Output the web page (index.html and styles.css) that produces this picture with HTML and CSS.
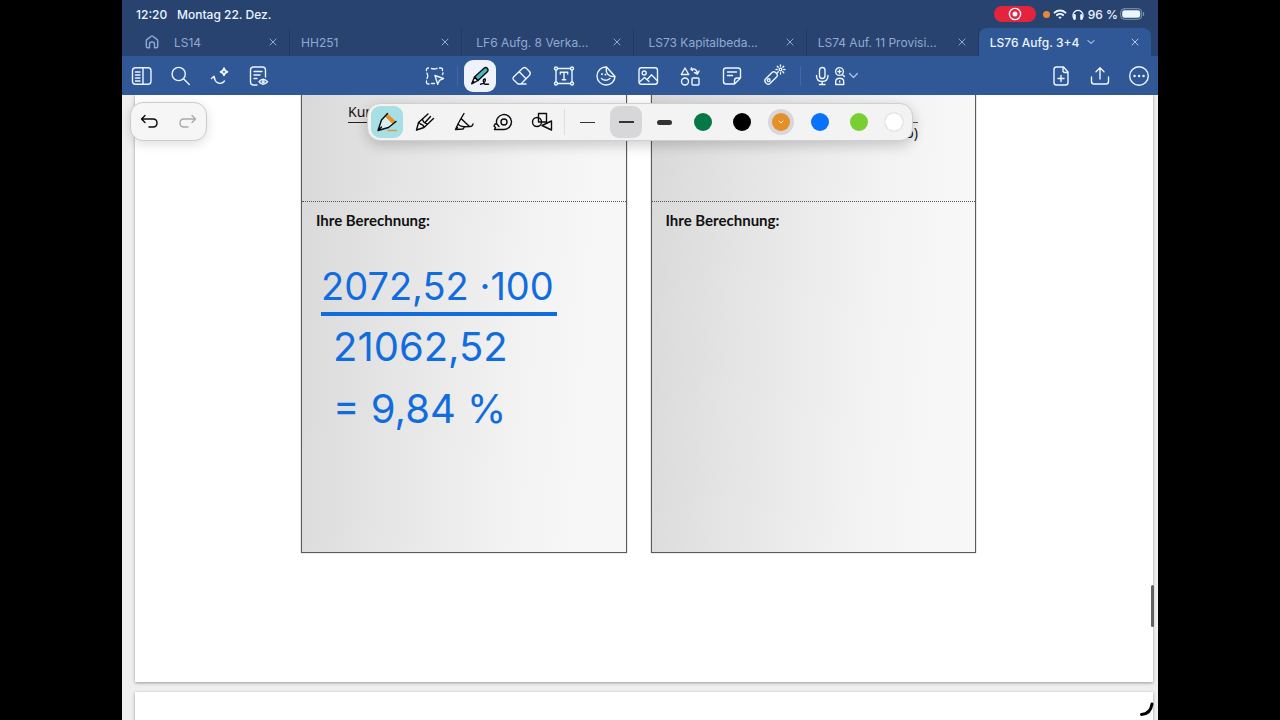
FILE: index.html
```html
<!DOCTYPE html>
<html lang="de">
<head>
<meta charset="utf-8">
<meta name="viewport" content="width=device-width, initial-scale=1">
<title>LS76 Aufg. 3+4</title>
<link rel="stylesheet" href="styles.css">
</head>
<body>
<div class="device">
  <header class="status">
    <span class="status-time">12:20</span>
    <span>Montag 22. Dez.</span>
    <div class="status-right">
      <span class="record"><svg class="icon-s" viewBox="0 0 16 16"><circle cx="8" cy="8" r="5.6"/><circle class="fill" cx="8" cy="8" r="2.5"/></svg></span>
      <span class="mic-dot"></span>
      <svg class="icon-s wifi" viewBox="0 0 16 16"><path d="M2.6 6.6a7.8 7.8 0 0 1 10.800 0M5 9.100a4.400 4.400 0 0 1 6 0"/><path class="fill" d="M6.300 11.200a2.500 2.500 0 0 1 3.400 0L8 13z"/></svg>
      <svg class="icon-s" viewBox="0 0 16 16"><path d="M4 12.500A5 5 0 1 1 12 12.500"/><path class="thick" d="M4.600 9.300v3.400M11.400 9.300v3.400"/></svg>
      <span>96 %</span>
      <svg class="battery" viewBox="0 0 25 12"><rect class="shell" x=".7" y=".7" width="21" height="10.6" rx="3.6"/><rect class="fill" x="2.2" y="2.2" width="18" height="7.6" rx="2.4"/><path class="shell" d="M23.600 4.500v3"/></svg>
    </div>
  </header>

  <nav class="tabs">
    <button class="home" aria-label="Startseite"><svg class="icon-s" viewBox="0 0 16 16"><path d="M2.300 6.600Q2.300 6 2.800 5.600L7.200 2.200Q8 1.600 8.800 2.200L13.200 5.600Q13.700 6 13.700 6.600V12.500Q13.700 13.800 12.400 13.800H10.500V10Q10.500 8 8 8T5.500 10V13.800H3.600Q2.300 13.800 2.300 12.500z"/></svg></button>
    <div class="tab tab-cut"><span>LS14</span><button class="close" aria-label="Schließen"><svg viewBox="0 0 8 8"><path d="M1 1l6 6M7 1L1 7"/></svg></button></div>
    <div class="tab"><span>HH251</span><button class="close" aria-label="Schließen"><svg viewBox="0 0 8 8"><path d="M1 1l6 6M7 1L1 7"/></svg></button></div>
    <div class="tab tab-long"><span>LF6 Aufg. 8 Verka...</span><button class="close" aria-label="Schließen"><svg viewBox="0 0 8 8"><path d="M1 1l6 6M7 1L1 7"/></svg></button></div>
    <div class="tab tab-long"><span>LS73 Kapitalbeda...</span><button class="close" aria-label="Schließen"><svg viewBox="0 0 8 8"><path d="M1 1l6 6M7 1L1 7"/></svg></button></div>
    <div class="tab"><span>LS74 Auf. 11 Provisi...</span><button class="close" aria-label="Schließen"><svg viewBox="0 0 8 8"><path d="M1 1l6 6M7 1L1 7"/></svg></button></div>
    <div class="tab tab-active"><span>LS76 Aufg. 3+4</span><svg class="chev" viewBox="0 0 8 8"><path d="M1 2.500l3 3 3-3"/></svg><button class="close" aria-label="Schließen"><svg viewBox="0 0 8 8"><path d="M1 1l6 6M7 1L1 7"/></svg></button></div>
  </nav>

  <div class="toolbar">
    <div class="tools">
      <button class="tool" aria-label="Seitenleiste"><svg class="icon" viewBox="0 0 24 24"><rect x="2.500" y="3.800" width="18.500" height="16.500" rx="3"/><path d="M13 4v16M5.500 8H10M5.500 11H10M5.500 14H10M5.500 17H10"/></svg></button>
      <button class="tool" aria-label="Suchen"><svg class="icon" viewBox="0 0 24 24"><circle cx="9.700" cy="10" r="6.600"/><path d="M14.500 14.800l5.800 5.700"/></svg></button>
      <button class="tool" aria-label="Assistent"><svg class="icon" viewBox="0 0 24 24"><path d="M3.500 14.500l2.500-2.200 1 3M6 12.500c.5 6.500 7 9 10.500 4.500"/><path class="mid" d="M16 4.200q.7 3 3.500 3.600-2.800.7-3.500 3.600-.7-2.900-3.500-3.600 2.800-.6 3.500-3.600z"/></svg></button>
      <button class="tool" aria-label="Leseansicht"><svg class="icon" viewBox="0 0 24 24"><path d="M18.500 13V6q0-3-3-3H6.500q-3 0-3 3v12q0 3 3 3H10M7 7.500h8M7 11h6M7 14.500h3"/><path d="M12 17.800q4-5 8.500 0-4.500 5-8.500 0z"/><circle cx="16.200" cy="17.800" r="1"/></svg></button>
    </div>
    <div class="tools tools-mid">
      <button class="tool" aria-label="Lasso"><svg class="icon" viewBox="0 0 24 24"><path d="M5.500 4Q3 4 3.500 6.500M8.500 4.500q3 1 5.500-.2M16.500 4q3.500-.5 3 2.500M20 9l-.5 1.500M4 9q1.500 2.500 0 5.500M3.500 17Q3 20.500 6 20M8.500 19.500h3M12 11.500l8.500 3-4 1.800-1.800 4z"/></svg></button>
      <i class="rule"></i>
      <button class="tool tool-on" aria-label="Stift"><svg class="icon ink" viewBox="0 0 24 24"><path class="teal" d="M6.500 13L16 4.200Q17.800 2.700 19.300 4.200T19.600 7.500L10 16.500z"/><path d="M6.500 13l3.500 3.500-6.300 3.300zM4 19.500l1.800-1.800"/><path d="M12.500 20.300c4.500-.3 6-5.500 4-5.300s-1.200 4.800.5 5.200h3.500"/></svg></button>
      <button class="tool" aria-label="Radierer"><svg class="icon" viewBox="0 0 24 24"><path d="M3.800 12.800L12.700 4.300Q14.500 2.800 16.300 4.300L19.500 7.500Q21 9.300 19.500 11.200L11 20H8L3.800 16Q2.200 14.400 3.800 12.800zM9.300 7.800l6.700 7M11 20h5"/></svg></button>
      <button class="tool" aria-label="Text"><svg class="icon" viewBox="0 0 24 24"><path d="M5 4.500h14M5 19.500h14M4 6v12M20 6v12M8.300 10V8.300h7.400V10M12 8.300v7.400M10.300 15.700h3.400"/><g class="nodes"><circle cx="4" cy="4.500" r="1.500"/><circle cx="20" cy="4.500" r="1.500"/><circle cx="4" cy="19.500" r="1.500"/><circle cx="20" cy="19.500" r="1.500"/></g></svg></button>
      <button class="tool" aria-label="Sticker"><svg class="icon" viewBox="0 0 24 24"><path d="M12.500 3C7 2.500 3 7 3 12s4 9 9 9 9-4 9-8.500zM12.500 3q-1 5 1.500 7.500t7 2M7.500 14.500q4 3.500 8.500 0"/><path class="mid" d="M8 10v.3M11.500 10.500v.2"/></svg></button>
      <button class="tool" aria-label="Bild"><svg class="icon" viewBox="0 0 24 24"><rect x="3" y="3.800" width="18.500" height="16.500" rx="2.500"/><circle cx="8.200" cy="9" r="2"/><path d="M3.500 18l5-4.500 4.500 4M11 15.800l4.500-5 6 6.200"/></svg></button>
      <button class="tool" aria-label="Elemente"><svg class="icon" viewBox="0 0 24 24"><path d="M7 4l3.700 6.500H3.300zM13 5.500q5-2 6.500 3.800M21 7l-1.500 3-3-1.500M13.500 4l-.5 1.500 1.500 1"/><circle cx="7" cy="17.500" r="3.500"/><rect x="14" y="14" width="7" height="7" rx="1"/></svg></button>
      <button class="tool" aria-label="Notiz"><svg class="icon" viewBox="0 0 24 24"><path d="M14.500 20H6q-2.500 0-2.500-2.500v-11Q3.500 4 6 4h12q2.500 0 2.500 2.500V14l-6 6v-3.500q0-2.500 2.500-2.500h3.500M7.500 8h9M7.500 11.500h5"/></svg></button>
      <button class="tool" aria-label="Laserpointer"><svg class="icon" viewBox="0 0 24 24"><path d="M3.500 15l6.800-6.700q1.500-1.200 3 0l1.500 1.500q1.300 1.500 0 3L8 19.500q-1.700 1.500-3.500 0l-1-1q-1.500-1.800 0-3.500z"/><circle cx="6.700" cy="16.200" r="1.400"/><circle cx="18.500" cy="5.500" r="1.400"/><path d="M18.500 1v1.200M18.500 8.800V10M14 5.500h1.200M21.800 5.500H23M15.300 2.300l.9.900M20.800 7.800l.9.900M15.300 8.700l.9-.9M20.800 3.200l.9-.9"/></svg></button>
      <i class="rule rule-audio"></i>
      <button class="tool tool-audio" aria-label="Audio"><svg class="icon" viewBox="0 0 24 24"><rect x="9.500" y="3.500" width="5.500" height="11" rx="2.700"/><path d="M6.500 11.500q0 6 5.700 6t5.800-6M12.200 17.500v3M9.500 20.500h5.500"/></svg><svg class="icon-n" viewBox="0 0 12 24"><circle cx="5.500" cy="7.500" r="3.900"/><path d="M4 7.500h3M5.500 6v3M8.300 10.500l2 2M1.700 20.500h8v-3q0-3.300-4-3.300t-4 3.300zM5.700 17v1"/></svg><svg class="chev" viewBox="0 0 8 8"><path d="M.5 2.300L4 5.800l3.500-3.500"/></svg></button>
    </div>
    <div class="tools tools-end">
      <button class="tool" aria-label="Seite hinzufügen"><svg class="icon" viewBox="0 0 24 24"><path d="M14.500 3H7.500Q5 3 5 5.500v13Q5 21 7.500 21h9q2.500 0 2.500-2.500V8zM14 3v3.500Q14 8.500 16 8.500h3M12 11.500v6M9 14.500h6"/></svg></button>
      <button class="tool" aria-label="Teilen"><svg class="icon" viewBox="0 0 24 24"><path d="M3.500 13v4.500q0 2.500 2.500 2.500h12q2.500 0 2.500-2.500V13M12 15V4M8 7.800l4-4 4 4"/></svg></button>
      <button class="tool" aria-label="Mehr"><svg class="icon" viewBox="0 0 24 24"><circle cx="12" cy="12" r="9.300"/><path class="thick" d="M7.500 12h.1M12 12h.1M16.500 12h.1"/></svg></button>
    </div>
  </div>

  <main class="canvas">
    <article class="page">
      <section class="sheet">
        <div class="task"><span class="term">Kur</span></div>
        <div class="work">
          <h2>Ihre Berechnung:</h2>
          <div class="ink-note">
            <p class="over">2072,52 ·100</p>
            <p>21062,52</p>
            <p>= 9,84 %</p>
          </div>
        </div>
      </section>
      <section class="sheet">
        <div class="task task-right"><span class="denominator">o)</span></div>
        <div class="work"><h2>Ihre Berechnung:</h2></div>
      </section>
    </article>
    <article class="page page-next"></article>

    <div class="history">
      <button aria-label="Rückgängig"><svg class="icon ink" viewBox="0 0 24 24"><path d="M7 5.500L3.500 9 7 12.500M3.500 9H15q4 0 4 4t-4 4h-4"/></svg></button>
      <button aria-label="Wiederholen" disabled><svg class="icon" viewBox="0 0 24 24"><path d="M17 5.500L20.500 9 17 12.500M20.500 9H9q-4 0-4 4t4 4h4"/></svg></button>
    </div>

    <div class="palette">
      <button class="pen-on" aria-label="Füller"><svg class="icon ink" viewBox="0 0 24 24"><path class="pale" d="M3 20.500L6.500 10 10.500 6l7.500 7.500-4.500 4z"/><path class="orange" d="M12.500 4.500l7.500 7-2.500 1.500-6.500-6.500z"/><path d="M12.500 3.500L6.500 10 3 20.500l10.500-3 7.500-6M3 20.500l3.500-3.500"/><path class="accent" d="M13 20.500h8.500"/></svg></button>
      <button aria-label="Kugelschreiber"><svg class="icon ink" viewBox="0 0 24 24"><path d="M3.500 20l2-7.500L15 4M5.500 12.500q1 .2 1.800 1.500 3 .3 3.700 3.500L3.500 20M11 17.500L20.500 8.500M9.500 9q.5 4 5 5M12.500 12l5-5.500"/></svg></button>
      <button aria-label="Pinselstift"><svg class="icon ink" viewBox="0 0 24 24"><path d="M12 3.500L9 8.500 6 14l-2.500 5.500 7.500-.5 1.500-2.200 5-.3q3 .3 3.500-2.500M9 8.500l8.500 8M6 14q1 2 6.500 2.800M3.500 19.500l2-2"/></svg></button>
      <button aria-label="Klebeband"><svg class="icon ink" viewBox="0 0 24 24"><path d="M13 19.500H3.500l1-2-1.500-1.500 1-2h2M13 19.500a7.500 7.500 0 1 0-7.300-5.700L8 16.500"/><circle cx="13" cy="12" r="3"/></svg></button>
      <button aria-label="Formen"><svg class="icon ink" viewBox="0 0 24 24"><circle cx="7" cy="12" r="4.500"/><path d="M8.500 8V3.500h8V12h-8zM21.500 11v9L12 15.500z"/></svg></button>
      <i class="rule"></i>
      <button aria-label="Dünn"><span class="line line-thin"></span></button>
      <button class="width-on" aria-label="Mittel"><span class="line line-mid"></span></button>
      <button aria-label="Dick"><span class="line line-bold"></span></button>
      <button aria-label="Grün"><span class="dot dot-green"></span></button>
      <button aria-label="Schwarz"><span class="dot dot-black"></span></button>
      <button aria-label="Orange"><span class="dot dot-orange"><svg viewBox="0 0 8 8"><path d="M2 3l2 2 2-2"/></svg></span></button>
      <button aria-label="Blau"><span class="dot dot-blue"></span></button>
      <button aria-label="Hellgrün"><span class="dot dot-lime"></span></button>
      <button class="last" aria-label="Weiß"><span class="dot dot-white"></span></button>
    </div>

    <div class="scroll-thumb"></div>
    <svg class="corner" viewBox="0 0 16 16"><path d="M2.500 13.500q9-.5 10.500-10.500"/></svg>
  </main>
</div>
</body>
</html>
```
FILE: styles.css
```css
* { box-sizing: border-box; }

body {
  margin: 0;
  background: #000;
  font-family: Inter, "Liberation Sans", sans-serif;
  font-size: 12px;
}

button {
  display: flex;
  align-items: center;
  justify-content: center;
  margin: 0;
  padding: 0;
  border: 0;
  background: none;
  color: inherit;
  font: inherit;
}

svg {
  display: block;
  flex: none;
  fill: none;
  stroke: currentColor;
  stroke-width: 1.4;
  stroke-linecap: round;
  stroke-linejoin: round;
}

svg .fill { fill: currentColor; stroke: none; }
svg .mid { stroke-width: 1.8; }
svg .thick { stroke-width: 2.4; }

.icon { width: 24px; height: 24px; }
.icon-n { width: 12px; height: 24px; }
.icon-s { width: 16px; height: 16px; }
.ink { color: #0b0b0b; }

.device {
  display: flex;
  flex-direction: column;
  height: 100vh;
  margin: 0 122px;
  background: #28436f;
  color: #eaf5ff;
}

/* status bar */
.status {
  display: flex;
  align-items: center;
  height: 28px;
  padding: 0 13px 0 14px;
  font-weight: 500;
}
.status-time { width: 41px; }
.status-right {
  display: flex;
  align-items: center;
  gap: 2px;
  margin-left: auto;
}
.record {
  display: grid;
  place-items: center;
  width: 42px;
  height: 16px;
  border-radius: 8px;
  background: #e4243c;
}
.mic-dot {
  width: 7px;
  height: 7px;
  margin-left: 5px;
  border-radius: 50%;
  background: #e5873a;
}
.wifi { stroke-width: 2; }
.battery { width: 25px; height: 12px; }
.battery .shell { stroke: #8396b5; stroke-width: 1; }

/* document tabs */
.tabs {
  display: grid;
  grid-template-columns: 52px 116fr repeat(5, 172fr) 7px;
  height: 28px;
  color: #92a9d5;
}
.home { padding-left: 8px; }
.tab {
  display: flex;
  align-items: center;
  min-width: 0;
  overflow: hidden;
  padding: 0 11px;
  border-right: 1px solid #213a64;
  white-space: nowrap;
}
.tab-long { padding-left: 14px; }
.tab-cut { padding-left: 0; }
.tab-active {
  border: 0;
  border-radius: 8px 8px 0 0;
  background: #305796;
  color: #eaf5ff;
  font-weight: 500;
}
.close {
  width: 10px;
  height: 16px;
  margin-left: auto;
}
.close svg { width: 8px; height: 8px; stroke-width: 1; }
.tab-active .close { color: #b4c8ec; }
.chev { width: 8px; height: 8px; margin-left: 8px; stroke-width: 1; }

/* main toolbar */
.toolbar {
  display: grid;
  grid-template-columns: 1fr auto 1fr;
  height: 39px;
  background: #305796;
}
.tools { display: flex; align-items: center; }
.tools-end { justify-content: flex-end; }
.tool { width: 39px; height: 32px; }
.tools-mid .tool { width: 42px; }
.tools-mid .tool-on {
  width: 32px;
  margin: 0 5px;
  border-radius: 9px;
  background: #eef2fb;
}
.tools-mid .tool-audio { width: 64px; justify-content: flex-start; padding-left: 8px; }
.tool-audio .chev { width: 9px; height: 9px; margin-left: 3px; color: #a9c0e8; stroke-width: 1.2; }
.rule { width: 1px; height: 20px; margin: 0 1px; background: #4469a3; }
.rule-audio { margin-left: 5px; }
.teal { fill: #47b7c5; }
.nodes { fill: #305796; }

/* pages */
.canvas {
  position: relative;
  flex: 1;
  min-height: 0;
  overflow: hidden;
  padding: 0 5px 0 13px;
  background: #efefef;
  color: #111;
}
.page {
  display: grid;
  grid-template-columns: 1fr 1fr;
  gap: 24px;
  margin-bottom: 10px;
  padding: 0 177px 129px 166px;
  background: #fff;
  box-shadow: 0 1px 3px #999;
}
.page-next { height: 60px; }
.sheet {
  border: 1px solid #5c5c5c;
  border-top: 0;
  background: linear-gradient(94deg, #d9d9d9, #e3e3e3 25%, #f2f1f2 62%, #f8f7f8 85%);
  box-shadow: 0 0 1px #777;
  font-family: "Noto Sans", "Open Sans", sans-serif;
}
.task {
  display: flex;
  align-items: flex-start;
  height: 107px;
  padding: 7px 57px 0 46px;
  border-bottom: 1px dotted #555;
  font-size: 14px;
  line-height: 20px;
}
.term { width: 40px; border-bottom: 1px solid #222; }
.task-right { justify-content: flex-end; padding-top: 27px; }
.denominator { width: 40px; border-top: 1px solid #555; text-align: right; }
.work { height: 350px; padding: 8px 14px; }
.work h2 {
  margin: 0;
  font-family: Lato, "Noto Sans", sans-serif;
  font-size: 15px;
  font-weight: 700;
  line-height: 20px;
}

/* handwritten calculation */
.ink-note {
  width: 236px;
  margin: 31px 0 0 5px;
  color: #116dde;
  font-family: Inter, sans-serif;
  font-size: 40px;
  line-height: 62px;
}
.ink-note p { margin: 0; padding-left: 12px; }
.ink-note .over {
  padding: 0;
  border-bottom: 4px solid #116dde;
  font-size: 38px;
  line-height: 51px;
  white-space: nowrap;
}

/* floating controls */
.history {
  position: absolute;
  top: 7px;
  left: 8px;
  display: flex;
  width: 77px;
  height: 39px;
  border: 1px solid #ccc;
  border-radius: 13px;
  background: #f6f6f6;
  box-shadow: 0 3px 12px #0002;
}
.history button { flex: 1; }
.history button:disabled { color: #aaa; }

.palette {
  position: absolute;
  top: 8px;
  left: 50%;
  display: flex;
  align-items: center;
  width: 546px;
  height: 38px;
  border: 1px solid #d0d0d0;
  border-radius: 13px;
  background: #f3f3f4;
  box-shadow: 0 4px 14px #0003;
  transform: translateX(-50%);
}
.palette button { flex: 1; height: 32px; }
.palette .rule { height: 26px; margin: 0 3px; background: #ddd; }
.palette .pen-on, .palette .width-on {
  flex: none;
  width: 32px;
  margin: 0 3px;
  border-radius: 9px;
}
.palette .last { flex: none; width: 32px; margin-right: 2px; }
.pen-on { background: #a7dfe4; }
.palette .width-on { background: #d7d7da; }
.orange { fill: #e5912e; stroke: #e5912e; }
.pale { fill: #d9eff0; stroke: none; }
.accent { stroke: #d39a48; }

.line { width: 15px; height: 1px; background: #333; }
.line-mid { height: 2px; }
.line-bold { height: 5px; border-radius: 3px; }
.dot { width: 18px; height: 18px; border-radius: 50%; }
.dot-green { background: #087747; }
.dot-black { background: #000; }
.dot-orange {
  display: grid;
  place-items: center;
  background: #e68e28;
  box-shadow: 0 0 0 4px #d7d7d9;
  color: #fff;
}
.dot-orange svg { width: 8px; height: 8px; stroke-width: 1; }
.dot-blue { background: #0873fa; }
.dot-lime { background: #78cf32; }
.dot-white { background: #fff; box-shadow: 0 0 1px #888; }

.scroll-thumb {
  position: absolute;
  top: 490px;
  right: 4px;
  width: 3px;
  height: 42px;
  border-radius: 2px;
  background: #606060;
}
.corner {
  position: absolute;
  right: 3px;
  bottom: 3px;
  width: 16px;
  height: 16px;
  color: #000;
  stroke-width: 3;
}
```
